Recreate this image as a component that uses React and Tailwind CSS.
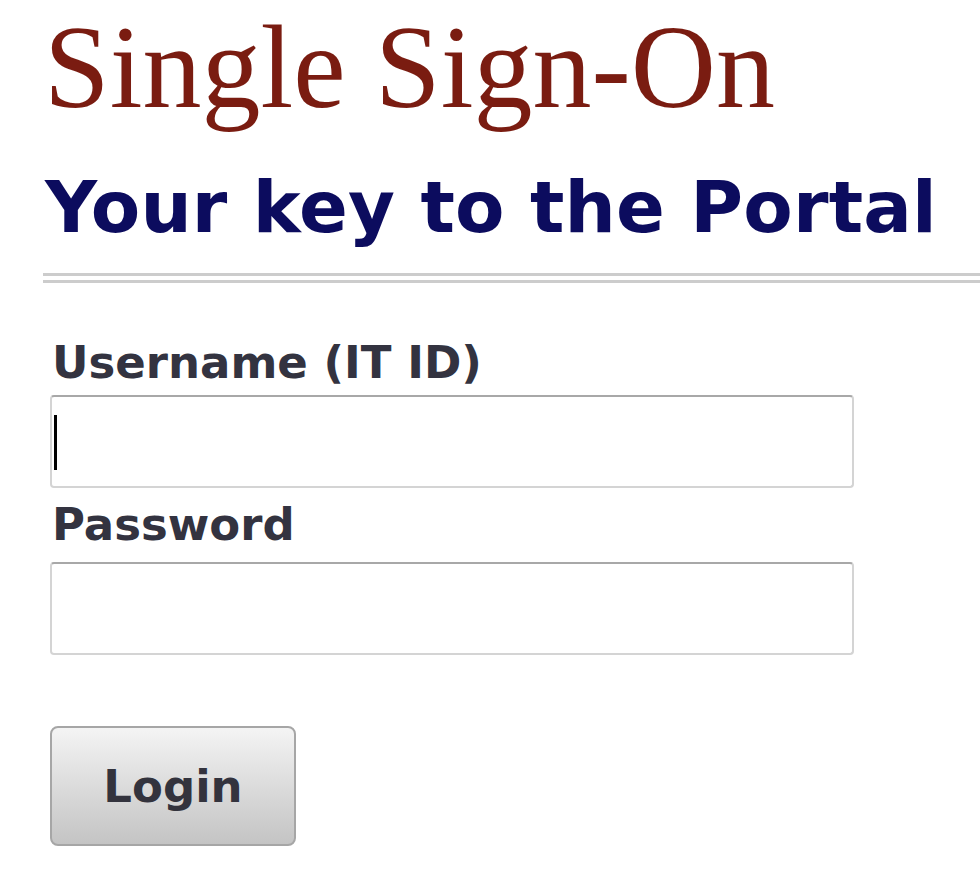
import { useState } from 'react';

export default function App() {
  const [form, setForm] = useState({ username: '', password: '' });

  const handleChange = (e) => {
    setForm({ ...form, [e.target.name]: e.target.value });
  };

  return (
    <div className="min-h-[889px] bg-white pl-[43px]">
      <h1 className="pt-[9px] pl-[1px] font-['Liberation_Serif',Georgia,serif] text-[118px] leading-none font-normal text-[#7a1c11]">
        Single Sign-On
      </h1>
      <h2 className="mt-[44px] pl-[2px] font-['DejaVu_Sans',Verdana,sans-serif] text-[72px] leading-none font-bold tracking-[0.2px] text-[#0c0c5e]">
        Your key to the Portal
      </h2>
      <div className="mt-[30px] h-[10px] border-y-[3px] border-[#cccccc]" />

      <form onSubmit={(e) => e.preventDefault()} className="pl-[7px] font-['DejaVu_Sans',Verdana,sans-serif]">
        <label htmlFor="username" className="mt-[57px] block pl-[2px] text-[45px] leading-none font-bold text-[#333340]">
          Username (IT ID)
        </label>
        <div className="relative mt-[10px] w-[804px]">
          <input
            id="username"
            name="username"
            value={form.username}
            onChange={handleChange}
            className="block h-[93px] w-full rounded-[4px] border-2 border-[#d4d4d4] border-t-[#a8a8a8] bg-white px-[3px] text-[45px] text-[#222] caret-transparent outline-none"
          />
          {/* text cursor as shown in the screenshot */}
          {form.username === '' && (
            <span className="pointer-events-none absolute left-[4px] top-[20px] h-[55px] w-[3px] bg-black" />
          )}
        </div>
        <label htmlFor="password" className="mt-[14px] block pl-[2px] text-[45px] leading-none font-bold text-[#333340]">
          Password
        </label>
        <input
          id="password"
          name="password"
          type="password"
          value={form.password}
          onChange={handleChange}
          className="mt-[15px] block h-[93px] w-[804px] rounded-[4px] border-2 border-[#d4d4d4] border-t-[#a8a8a8] bg-white px-[3px] text-[45px] text-[#222] outline-none"
        />
        <button
          type="submit"
          className="mt-[71px] flex h-[120px] w-[246px] items-center justify-center rounded-[8px] border-2 border-[#a6a6a6] bg-gradient-to-b from-[#f4f4f4] to-[#c4c4c4] text-[45px] leading-none font-bold text-[#33333d]"
        >
          Login
        </button>
      </form>
    </div>
  );
}
